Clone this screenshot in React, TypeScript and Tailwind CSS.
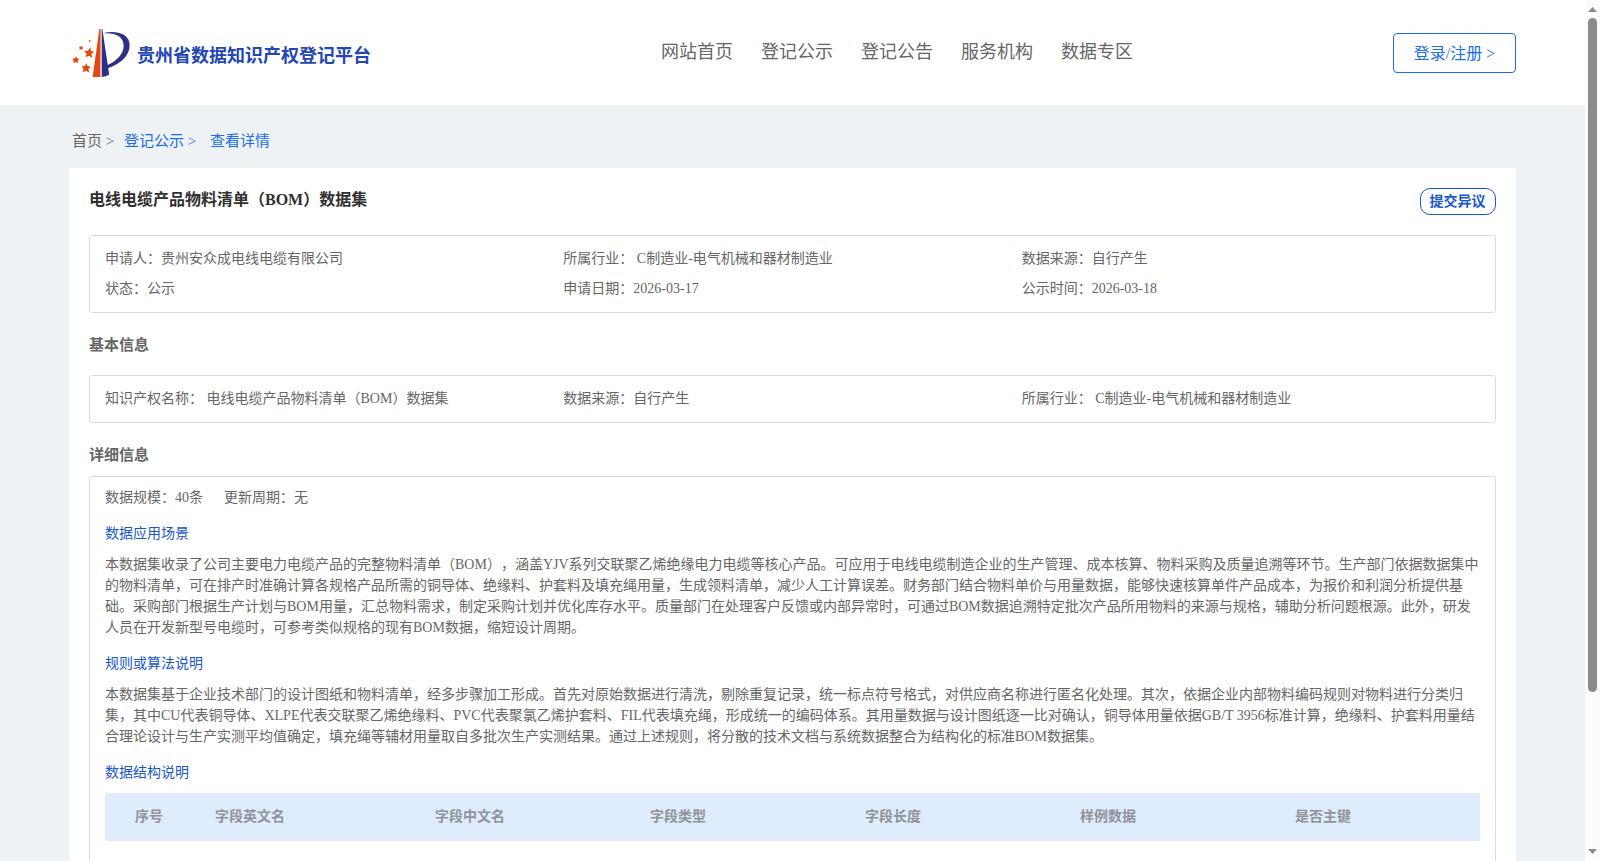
const NAV_ITEMS = ["网站首页", "登记公示", "登记公告", "服务机构", "数据专区"];

const SUMMARY = [
  "申请人：贵州安众成电线电缆有限公司",
  "所属行业： C制造业-电气机械和器材制造业",
  "数据来源：自行产生",
  "状态：公示",
  "申请日期：2026-03-17",
  "公示时间：2026-03-18",
];

const BASIC_INFO = [
  "知识产权名称： 电线电缆产品物料清单（BOM）数据集",
  "数据来源：自行产生",
  "所属行业： C制造业-电气机械和器材制造业",
];

const SCENARIO =
  "本数据集收录了公司主要电力电缆产品的完整物料清单（BOM），涵盖YJV系列交联聚乙烯绝缘电力电缆等核心产品。可应用于电线电缆制造企业的生产管理、成本核算、物料采购及质量追溯等环节。生产部门依据数据集中的物料清单，可在排产时准确计算各规格产品所需的铜导体、绝缘料、护套料及填充绳用量，生成领料清单，减少人工计算误差。财务部门结合物料单价与用量数据，能够快速核算单件产品成本，为报价和利润分析提供基础。采购部门根据生产计划与BOM用量，汇总物料需求，制定采购计划并优化库存水平。质量部门在处理客户反馈或内部异常时，可通过BOM数据追溯特定批次产品所用物料的来源与规格，辅助分析问题根源。此外，研发人员在开发新型号电缆时，可参考类似规格的现有BOM数据，缩短设计周期。";

const RULES =
  "本数据集基于企业技术部门的设计图纸和物料清单，经多步骤加工形成。首先对原始数据进行清洗，剔除重复记录，统一标点符号格式，对供应商名称进行匿名化处理。其次，依据企业内部物料编码规则对物料进行分类归集，其中CU代表铜导体、XLPE代表交联聚乙烯绝缘料、PVC代表聚氯乙烯护套料、FIL代表填充绳，形成统一的编码体系。其用量数据与设计图纸逐一比对确认，铜导体用量依据GB/T 3956标准计算，绝缘料、护套料用量结合理论设计与生产实测平均值确定，填充绳等辅材用量取自多批次生产实测结果。通过上述规则，将分散的技术文档与系统数据整合为结构化的标准BOM数据集。";

const COLUMNS = ["字段英文名", "字段中文名", "字段类型", "字段长度", "样例数据", "是否主键"];

function Logo() {
  return (
    <svg className="h-[50px] w-[58px]" viewBox="36 24 174 150">
      <path d="M118 27h4l-1 144H98z" fill="#e8450f" />
      <path d="M125 27h2l20 133v4q-10 6-22 7z" fill="#2b3187" />
      <path
        d="M134 38C172 32 209 42 209 76C209 108 180 133 143 145L141 136C167 124 191 104 191 77C191 50 166 38 134 40z"
        fill="#2b3187"
      />
      <g fill="#e8450f">
        <path d="M91 82l2 11 10 2-9 7 3 12-10-7-11 5 4-11-8-8 12-1z" />
        <path d="M79 130l4 9 10 1-8 7 3 11-10-6-10 5 3-10-6-8 10-1z" />
        <path d="M48 109l3 6 7 2-5 5 1 8-7-4-7 4 1-8-4-6 8-1z" />
        <path d="M65 77l1 4 4 2-3 3 0 5-4-3-5 1 1-5-2-4 5 0z" />
        <circle cx="89" cy="63" r="3" opacity="0.8" />
      </g>
    </svg>
  );
}

function Header() {
  return (
    <header className="flex h-[105px] bg-white pr-[69px] pl-[72px]">
      <div className="flex w-[589px] items-start pt-7">
        <Logo />
        <span className="mt-[14px] ml-[7px] text-lg leading-7 font-bold text-[#2346b4]">
          贵州省数据知识产权登记平台
        </span>
      </div>
      <nav className="flex gap-7 pt-[38px] text-lg leading-7">
        {NAV_ITEMS.map((item) => (
          <a key={item}>{item}</a>
        ))}
      </nav>
      <div className="ml-auto pt-[33px]">
        <button className="h-10 w-[123px] rounded border border-[#1a6eeb] pt-px text-base text-[#1a6eeb]">
          登录/注册 &gt;
        </button>
      </div>
    </header>
  );
}

function InfoGrid({ items }: { items: string[] }) {
  return (
    <div className="grid grid-cols-3 rounded-[3px] border border-[#dcdcdc] px-[15px] py-2">
      {items.map((item) => (
        <div key={item} className="h-[30px] leading-[30px] whitespace-pre">
          {item}
        </div>
      ))}
    </div>
  );
}

function Scrollbar() {
  return (
    <div className="flex w-[15px] shrink-0 flex-col items-center bg-[#fcfcfc]">
      <svg className="mt-[7px] h-[5px] w-[9px]" viewBox="0 0 9 5">
        <path d="M0 5L4.5 0L9 5z" fill="#8b8b8b" />
      </svg>
      <div className="mt-[6px] h-[674px] w-[9px] rounded-full bg-[#8b8b8b]" />
      <svg className="mt-auto mb-[7px] h-[5px] w-[9px]" viewBox="0 0 9 5">
        <path d="M0 0L4.5 5L9 0z" fill="#8b8b8b" />
      </svg>
    </div>
  );
}

export default function App() {
  return (
    <div className="flex h-[861px] overflow-hidden bg-[#eef2f5] font-['Liberation_Serif','Noto_Sans_CJK_SC',serif] text-sm text-[#666] [text-spacing-trim:space-all]">
      <div className="min-w-0 flex-1">
        <Header />

        {/* Breadcrumb */}
        <div className="flex h-[63px] pt-[21px] pl-[72px] text-[15px] leading-[30px] text-[#1a6eeb]">
          <span className="w-[52px] text-[#666]">首页 &gt;</span>
          <span className="w-[86px]">登记公示 &gt;</span>
          <span>查看详情</span>
        </div>

        <main className="mr-[69px] ml-[69px] h-[1200px] bg-white px-5 pt-5">
          <div className="flex h-[47px] items-start justify-between">
            <h1 className="text-base leading-6 font-bold text-[#303030]">
              电线电缆产品物料清单（BOM）数据集
            </h1>
            <button className="h-[27px] w-[76px] rounded-[10px] border border-[#1a56cc] pr-px text-sm leading-[25px] font-bold text-[#1a56cc]">
              提交异议
            </button>
          </div>

          <InfoGrid items={SUMMARY} />

          <h2 className="mt-4 mb-4 h-[30px] text-[15px] leading-8 font-bold">基本信息</h2>
          <InfoGrid items={BASIC_INFO} />

          <h2 className="mt-4 mb-[7px] h-[30px] text-[15px] leading-8 font-bold">详细信息</h2>
          <section className="h-[900px] rounded-[3px] border border-[#dcdcdc] px-[15px] pt-[10px]">
            <div className="flex gap-[21px] leading-[21px]">
              <span>数据规模：40条</span>
              <span>更新周期：无</span>
            </div>

            <h3 className="mt-[15px] leading-[21px] text-[#1a56cc]">数据应用场景</h3>
            <p className="mt-[10px] leading-[21px]">{SCENARIO}</p>

            <h3 className="mt-[15px] leading-[21px] text-[#1a56cc]">规则或算法说明</h3>
            <p className="mt-[10px] leading-[21px]">{RULES}</p>

            <h3 className="mt-[15px] leading-[21px] text-[#1a56cc]">数据结构说明</h3>
            <div className="mt-[10px] flex h-12 bg-[#dfecfe] pl-[30px] leading-[47px] font-bold text-[#909399]">
              <div className="w-20 shrink-0">序号</div>
              {COLUMNS.map((column, i) => (
                <div key={column} className={i === 0 ? "w-[220px] shrink-0" : "w-[215px] shrink-0"}>
                  {column}
                </div>
              ))}
            </div>
          </section>
        </main>
      </div>
      <Scrollbar />
    </div>
  );
}
